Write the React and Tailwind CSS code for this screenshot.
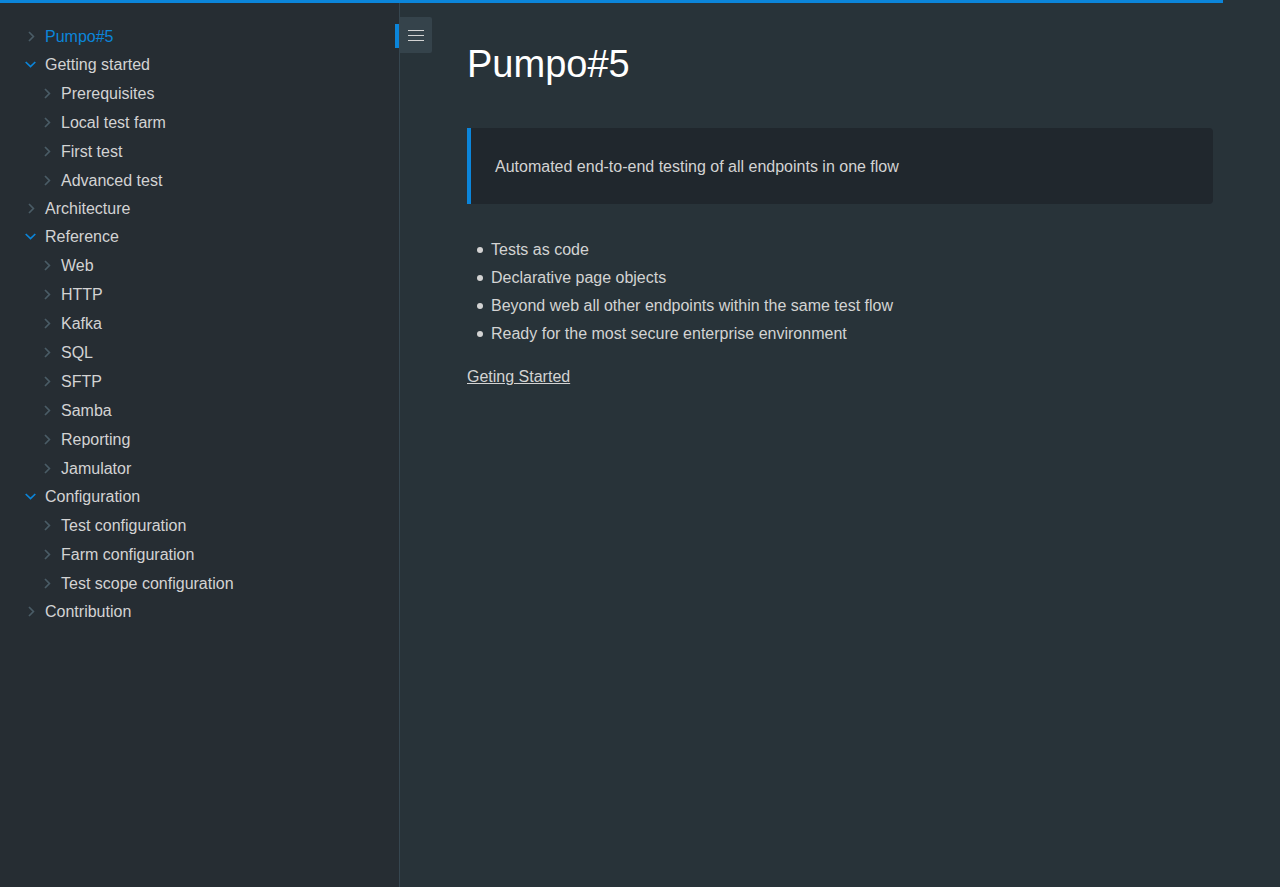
const sections = [
  { title: "Pumpo#5", active: true },
  {
    title: "Getting started",
    children: ["Prerequisites", "Local test farm", "First test", "Advanced test"],
  },
  { title: "Architecture" },
  {
    title: "Reference",
    children: ["Web", "HTTP", "Kafka", "SQL", "SFTP", "Samba", "Reporting", "Jamulator"],
  },
  {
    title: "Configuration",
    children: ["Test configuration", "Farm configuration", "Test scope configuration"],
  },
  { title: "Contribution" },
];

const features = [
  "Tests as code",
  "Declarative page objects",
  "Beyond web all other endpoints within the same test flow",
  "Ready for the most secure enterprise environment",
];

function Chevron({ open }) {
  return (
    <svg
      aria-hidden="true"
      className={open ? "h-3 w-3 shrink-0 text-[#0b85da]" : "h-3 w-3 shrink-0 text-[#4a5c66]"}
      viewBox="0 0 12 12"
      fill="none"
      stroke="currentColor"
      strokeWidth="1.7"
    >
      <path d={open ? "M1.7 4 6.5 8.6 11.3 4" : "M5 2 9.4 6.5 5 11"} />
    </svg>
  );
}

function Section({ title, active, children }) {
  return (
    <li>
      <a
        href="#"
        aria-current={active ? "page" : undefined}
        className={
          active
            ? "flex h-7 items-center gap-2 pl-6 text-[#0b85da]"
            : "flex h-7 items-center gap-2 pl-6"
        }
      >
        <Chevron open={Boolean(children)} />
        <span className="grow pt-0.5 pl-px">{title}</span>
        {active && <span className="h-6 w-1 bg-[#0b85da]" />}
      </a>
      {children && (
        <ul>
          {children.map((child) => (
            <li key={child}>
              <a href="#" className="flex h-[29px] items-center gap-2 pl-10">
                <Chevron />
                <span className="pt-0.5 pl-px">{child}</span>
              </a>
            </li>
          ))}
        </ul>
      )}
    </li>
  );
}

export default function App() {
  return (
    <div className="flex min-h-screen bg-[#283339] font-['Liberation_Sans',Arial,sans-serif] text-base text-[#d3d3d3]">
      <div className="fixed top-0 left-0 z-10 h-[3px] w-[95.55%] bg-[#0b85da]" />
      <aside className="w-[400px] shrink-0 border-r border-[#364650] bg-[#262d33] pt-[22px]">
        <nav aria-label="Documentation">
          <ul>
            {sections.map((section) => (
              <Section key={section.title} {...section} />
            ))}
          </ul>
        </nav>
      </aside>
      <button
        type="button"
        aria-label="Toggle sidebar"
        className="mt-[17px] flex h-9 w-8 shrink-0 items-center justify-center self-start rounded-r-xs bg-[#35434b]"
      >
        <svg className="h-4 w-4" viewBox="0 0 16 16" fill="currentColor" aria-hidden="true">
          <path d="M0 3h16v1H0zM0 8h16v1H0zM0 13h16v1H0z" />
        </svg>
      </button>
      <main className="min-w-0 grow pt-10 pr-[67px] pl-[35px]">
        <h1 className="text-[38px] leading-12 text-white">Pumpo#5</h1>
        <blockquote className="mt-10 rounded-r border-l-4 border-[#0b85da] bg-[#20272d] px-6 pt-[25px] pb-[23px] leading-7">
          <p>Automated end-to-end testing of all endpoints in one flow</p>
        </blockquote>
        <ul className="mt-8 leading-7">
          {features.map((feature) => (
            <li key={feature} className="flex items-center gap-2 pl-2.5">
              <span className="h-1.5 w-1.5 shrink-0 rounded-full bg-current" />
              <span>{feature}</span>
            </li>
          ))}
        </ul>
        <p className="mt-[15px] leading-7">
          <a href="#" className="underline">
            Geting Started
          </a>
        </p>
      </main>
    </div>
  );
}
